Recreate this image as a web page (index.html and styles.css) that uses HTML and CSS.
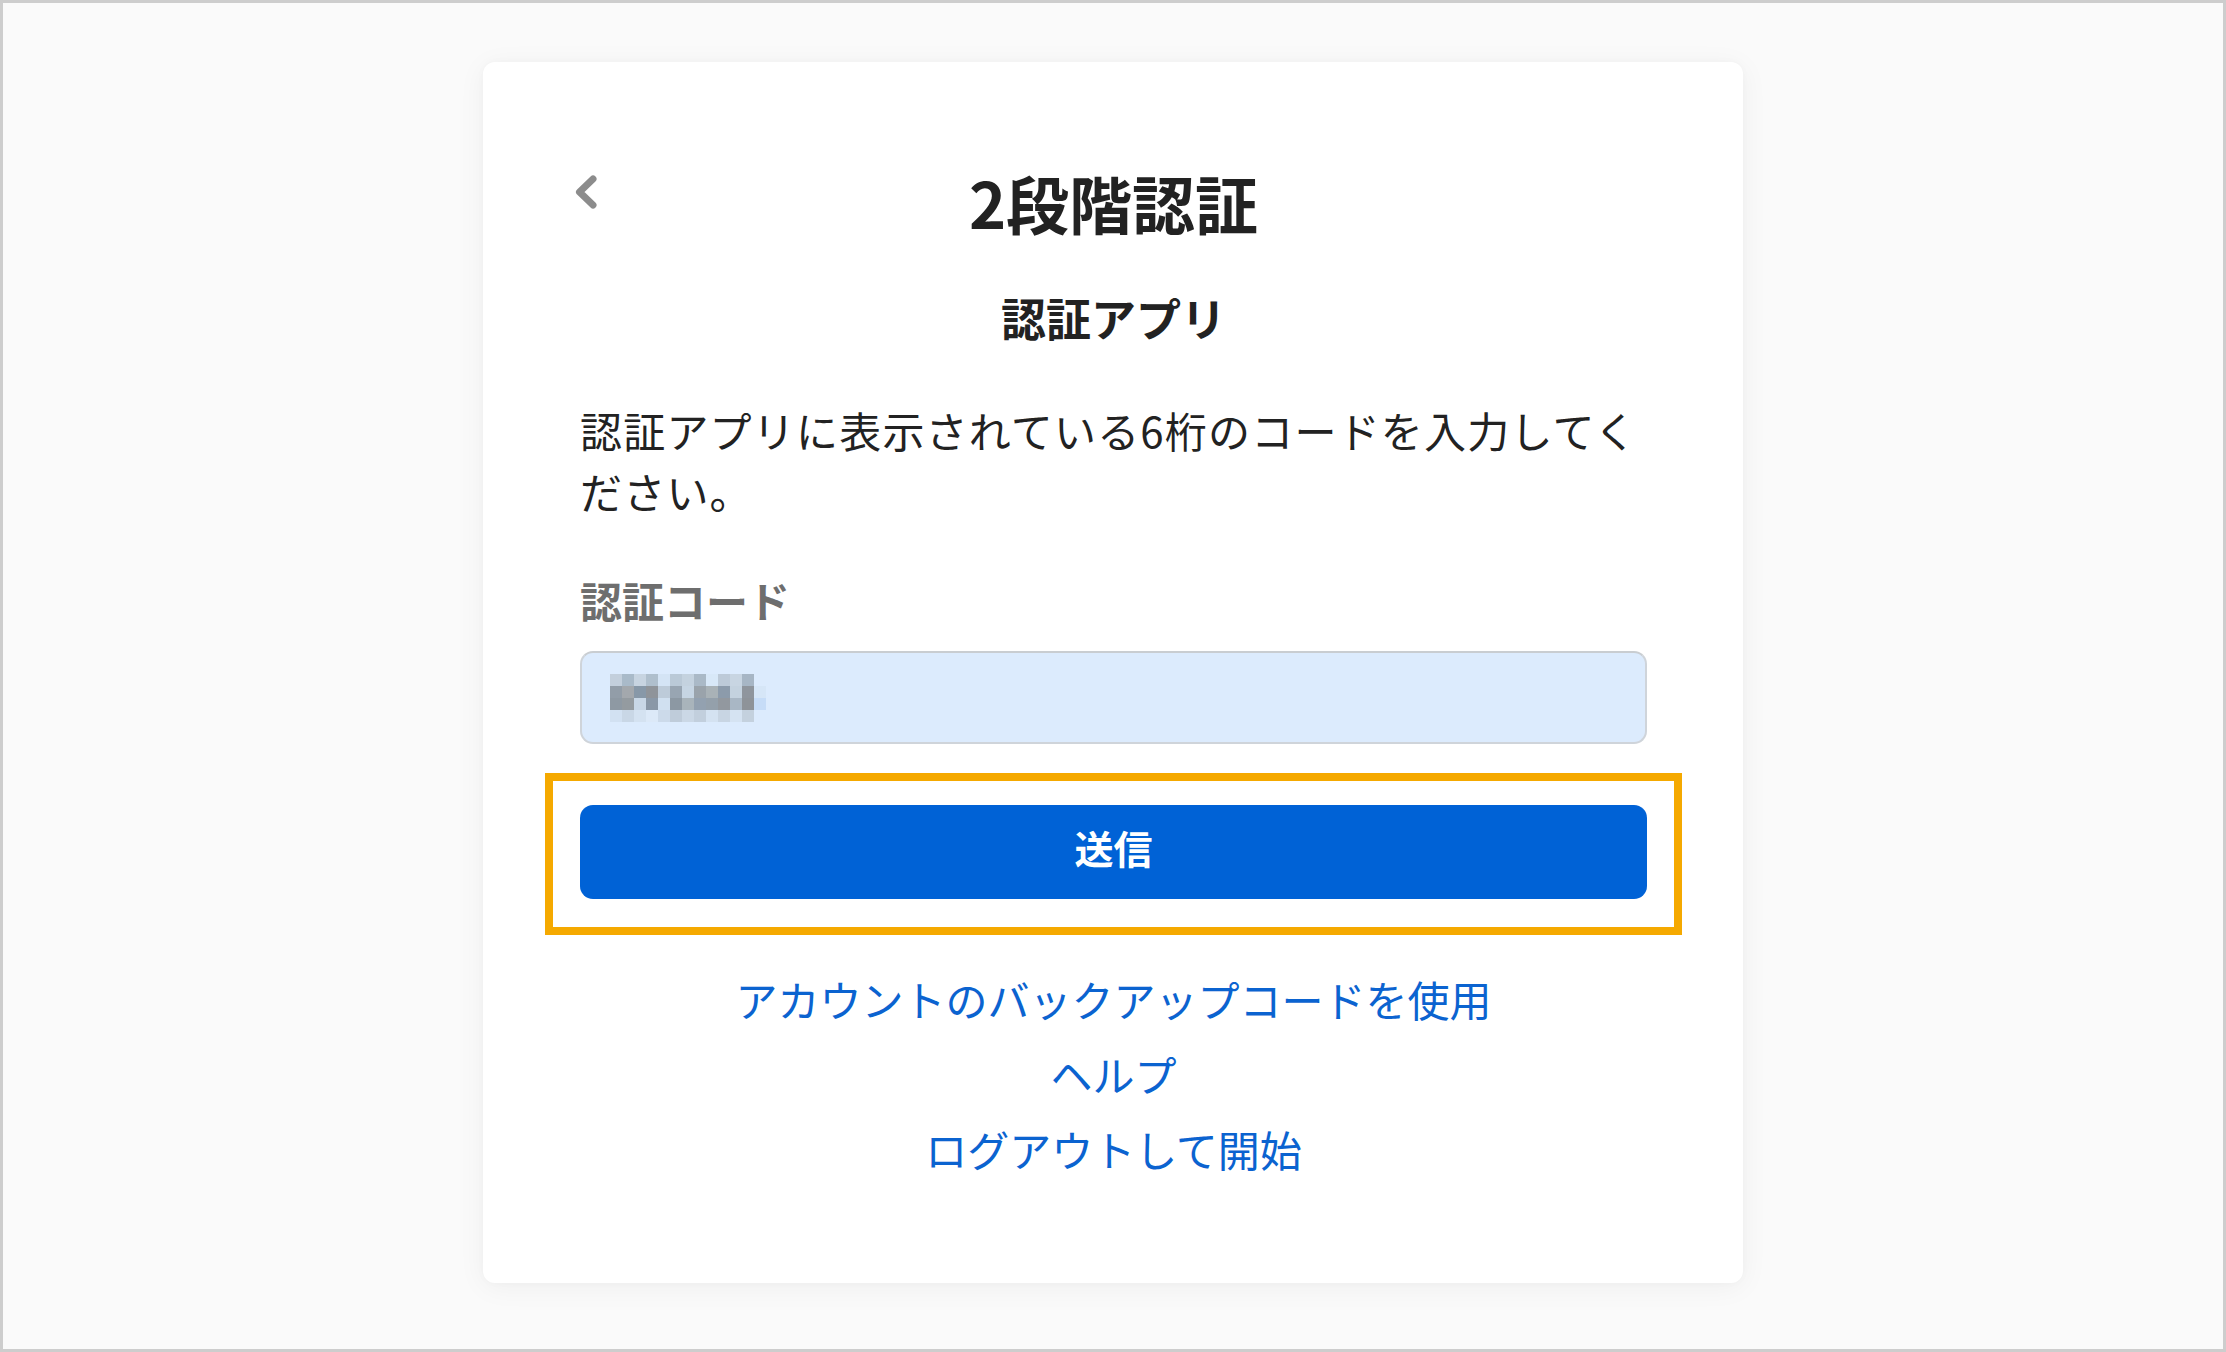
FILE: index.html
```html
<!DOCTYPE html>
<html lang="ja">
<head>
<meta charset="utf-8">
<title>2段階認証</title>
<link rel="stylesheet" href="styles.css">
</head>
<body>
<div class="frame">
  <main class="card">
    <header class="header">
      <a class="back" href="#" aria-label="戻る">
        <svg width="28" height="40" viewBox="0 0 28 40"><path d="M21 7 L7.5 20 L21 33" fill="none" stroke="#8c8c8c" stroke-width="7" stroke-linecap="round" stroke-linejoin="round"/></svg>
      </a>
      <h1 class="title">2段階認証</h1>
      <span></span>
    </header>
    <h2 class="subtitle">認証アプリ</h2>
    <p class="desc">認証アプリに表示されている6桁のコードを入力してください。</p>
    <label class="label">認証コード</label>
    <div class="input">
      <svg class="mosaic" width="168" height="48" viewBox="0 0 168 48" shape-rendering="crispEdges">
        <rect x="0" y="0" width="12" height="12" fill="#c3cfdc"/><rect x="12" y="0" width="12" height="12" fill="#a9bac9"/><rect x="24" y="0" width="12" height="12" fill="#c7d4e1"/><rect x="36" y="0" width="12" height="12" fill="#afbfcd"/><rect x="48" y="0" width="12" height="12" fill="#d4e4f5"/><rect x="60" y="0" width="12" height="12" fill="#bac9d7"/><rect x="72" y="0" width="12" height="12" fill="#c4d2df"/><rect x="84" y="0" width="12" height="12" fill="#aab9c7"/><rect x="96" y="0" width="12" height="12" fill="#d8e8f8"/><rect x="108" y="0" width="12" height="12" fill="#bdcad8"/><rect x="120" y="0" width="12" height="12" fill="#c8d5e2"/><rect x="132" y="0" width="12" height="12" fill="#a7b6c5"/>
        <rect x="0" y="12" width="12" height="12" fill="#929da8"/><rect x="12" y="12" width="12" height="12" fill="#a3a8ad"/><rect x="24" y="12" width="12" height="12" fill="#8798a8"/><rect x="36" y="12" width="12" height="12" fill="#8f949a"/><rect x="48" y="12" width="12" height="12" fill="#bdcbd9"/><rect x="60" y="12" width="12" height="12" fill="#98a5b2"/><rect x="72" y="12" width="12" height="12" fill="#c6d5e3"/><rect x="84" y="12" width="12" height="12" fill="#9aa3ab"/><rect x="96" y="12" width="12" height="12" fill="#a9b2b7"/><rect x="108" y="12" width="12" height="12" fill="#8c9bab"/><rect x="120" y="12" width="12" height="12" fill="#c4d2df"/><rect x="132" y="12" width="12" height="12" fill="#8f959d"/><rect x="144" y="12" width="12" height="12" fill="#d6e6f7"/>
        <rect x="0" y="24" width="12" height="12" fill="#8e99a3"/><rect x="12" y="24" width="12" height="12" fill="#949ba0"/><rect x="24" y="24" width="12" height="12" fill="#c8d7e6"/><rect x="36" y="24" width="12" height="12" fill="#8a98a7"/><rect x="48" y="24" width="12" height="12" fill="#d0e0f0"/><rect x="60" y="24" width="12" height="12" fill="#8c98a3"/><rect x="72" y="24" width="12" height="12" fill="#a9b4bb"/><rect x="84" y="24" width="12" height="12" fill="#93a1b0"/><rect x="96" y="24" width="12" height="12" fill="#94a0ab"/><rect x="108" y="24" width="12" height="12" fill="#92989f"/><rect x="120" y="24" width="12" height="12" fill="#a9b7c5"/><rect x="132" y="24" width="12" height="12" fill="#8e9399"/><rect x="144" y="24" width="12" height="12" fill="#c6dcf7"/>
        <rect x="0" y="36" width="12" height="12" fill="#d2e1f2"/><rect x="12" y="36" width="12" height="12" fill="#c9d7e6"/><rect x="24" y="36" width="12" height="12" fill="#d4e2f1"/><rect x="36" y="36" width="12" height="12" fill="#dce9f8"/><rect x="48" y="36" width="12" height="12" fill="#ccdaea"/><rect x="60" y="36" width="12" height="12" fill="#bfccda"/><rect x="72" y="36" width="12" height="12" fill="#cbd8e6"/><rect x="84" y="36" width="12" height="12" fill="#c2cfdd"/><rect x="96" y="36" width="12" height="12" fill="#d4e2f1"/><rect x="108" y="36" width="12" height="12" fill="#c8d5e3"/><rect x="120" y="36" width="12" height="12" fill="#d5e3f2"/><rect x="132" y="36" width="12" height="12" fill="#c4d1de"/>
      </svg>
    </div>
    <div class="submit-wrap">
      <button class="submit" type="button">送信</button>
    </div>
    <nav class="links">
      <a href="#">アカウントのバックアップコードを使用</a>
      <a href="#">ヘルプ</a>
      <a href="#">ログアウトして開始</a>
    </nav>
  </main>
</div>
</body>
</html>
```
FILE: styles.css
```css
* { box-sizing: border-box; }
html, body { margin: 0; padding: 0; }
body {
  font-family: "Noto Sans CJK JP", "Noto Sans", sans-serif;
  color: #222;
  overflow: hidden;
}
.frame {
  height: 100vh;
  border: 3px solid #cdcdcd;
  background: #fafafa;
  padding-top: 59px;
}
.card {
  width: 1260px;
  height: 1221px;
  margin: 0 auto;
  background: #fff;
  border-radius: 12px;
  box-shadow: 0 4px 28px rgba(0, 0, 0, 0.05), 0 0 8px rgba(0, 0, 0, 0.025);
  padding: 102px 96px 96px 97px;
  display: flex;
  flex-direction: column;
}
.header {
  display: grid;
  grid-template-columns: 1fr auto 1fr;
  align-items: start;
}
.back {
  display: block;
  width: 28px;
  height: 40px;
  margin-left: -8px;
  margin-top: 8px;
}
.back svg { display: block; }
.title {
  margin: 0;
  font-size: 63px;
  line-height: 76px;
  font-weight: 700;
  color: #222;
}
.subtitle {
  margin: 49px 0 0;
  text-align: center;
  font-size: 45px;
  line-height: 58px;
  font-weight: 700;
  color: #222;
}
.desc {
  margin: 52px 0 0;
  font-size: 42px;
  line-height: 61px;
  letter-spacing: 1.2px;
  color: #222;
}
.label {
  display: block;
  margin-top: 48px;
  font-size: 42px;
  line-height: 61px;
  font-weight: 700;
  color: #6e6e6e;
}
.input {
  margin-top: 21px;
  height: 93px;
  background: #dcebfd;
  border: 2px solid #cfd4da;
  border-top-color: #c9cdd1;
  border-radius: 13px;
  display: flex;
  align-items: center;
  padding-left: 28px;
}
.mosaic { display: block; }
.submit-wrap {
  position: relative;
  margin-top: 61px;
}
.submit-wrap::after {
  content: "";
  position: absolute;
  top: -32px;
  left: -35px;
  right: -35px;
  bottom: -36px;
  border: 8px solid #f5a900;
  pointer-events: none;
}
.submit {
  display: block;
  width: 100%;
  height: 94px;
  border: 0;
  border-radius: 13px;
  background: #0062d6;
  color: #fff;
  font-family: inherit;
  font-size: 39px;
  font-weight: 700;
  padding: 0 0 10px;
  cursor: pointer;
}
.links {
  margin-top: 62px;
  display: flex;
  flex-direction: column;
  align-items: center;
}
.links a {
  font-size: 42px;
  line-height: 75px;
  color: #0b63d0;
  text-decoration: none;
}
```
